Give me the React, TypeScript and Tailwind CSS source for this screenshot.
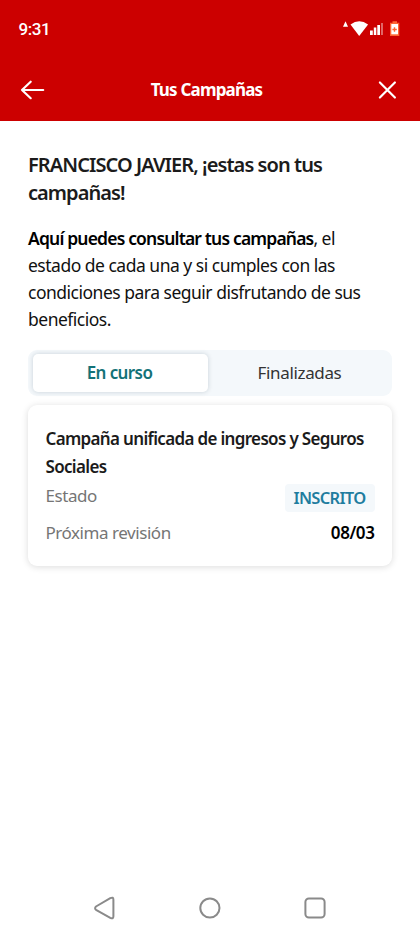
import React from 'react';

interface Campaign {
  name: string[];
  status: string;
  nextReview: string;
}

const campaign: Campaign = {
  name: ['Campaña unificada de ingresos y Seguros', 'Sociales'],
  status: 'INSCRITO',
  nextReview: '08/03',
};

const StatusBar = () => (
  <div className="flex h-[58px] items-center justify-between pl-[18.5px] pr-[20px]">
    <span className="font-[Roboto] text-[17px] font-medium leading-5 tracking-[-0.4px]">9:31</span>
    <svg width="58" height="20" viewBox="342 18 58 20" fill="none">
      <path d="M345.5 20.3l2.5 5.500h-5z" fill="#fff" />
      <path d="M350.5 23.5q8.800-6.600 17.600 0L359.2 35z" fill="#fff" />
      <path d="M370 29.500h2.800v4.500H370zM373.800 26.500h2.500v7.500h-2.500zM377.300 24h2.700v10h-2.700z" fill="#fff" />
      <path d="M381 22h2v12h-2z" fill="#fff" fillOpacity="0.4" />
      <path d="M392.500 20.200h4.500v1.500h2.300v13.300h-9.300v-13.300h2.500z" fill="#ff6534" />
      <path d="M391.300 23h6.700v10.300h-6.700z" fill="#fff" />
      <path d="M394.500 26.200v4.600M392.400 28.500h4.400" stroke="#ff6534" strokeWidth="1.4" />
    </svg>
  </div>
);

const Header = () => (
  <header className="h-[121px] bg-[#cc0000] text-white">
    <StatusBar />
    <div className="flex h-[63px] items-center justify-between pl-5 pr-[21px]">
      <button aria-label="Volver">
        <svg width="25" height="24" viewBox="0 0 25 24" fill="none" stroke="currentColor" strokeWidth="2.2" strokeLinecap="round" strokeLinejoin="round">
          <path d="M10.700 3.700L2 12l8.700 8.200M2 12h21.200" />
        </svg>
      </button>
      <h1 className="mr-[7px] text-[17px] font-bold leading-6 tracking-[-0.8px]">Tus Campañas</h1>
      <button aria-label="Cerrar">
        <svg width="24" height="24" viewBox="0 0 24 24" fill="none" stroke="currentColor" strokeWidth="2.2" strokeLinecap="round">
          <path d="M4.900 4.500l15 15M19.900 4.500l-15 15" />
        </svg>
      </button>
    </div>
  </header>
);

const Tabs = () => (
  <div className="mt-[17px] flex h-[46px] rounded-[9px] bg-[#f4f8fb] p-1 pl-[5px]">
    <button className="w-[175px] rounded-[5px] bg-white pr-[2px] text-[17px] font-semibold tracking-[-0.6px] text-[#137277] shadow-[0_0_5px_rgba(0,40,60,0.18)]">
      En curso
    </button>
    <button className="flex-1 pl-[3px] text-[17px] tracking-[-0.35px] text-[#333]">Finalizadas</button>
  </div>
);

const CampaignCard: React.FC<{ campaign: Campaign }> = ({ campaign }) => (
  <article className="mt-[9px] h-[161px] rounded-[9px] bg-white px-[17.5px] pt-5 shadow-[0_1px_7px_rgba(0,0,0,0.14)]">
    <h3 className="whitespace-nowrap text-[17px] font-semibold leading-7 tracking-[-0.67px] text-[#1b1b1b]">
      {campaign.name.map((line) => (
        <span key={line} className="block">{line}</span>
      ))}
    </h3>
    <div className="mt-[3px] flex items-start justify-between">
      <span className="text-[17px] leading-[23px] tracking-[-0.45px] text-[#757575]">Estado</span>
      <span className="flex h-7 w-[90px] items-center justify-center rounded-[4px] bg-[#f4f8fb] text-[16.5px] font-semibold tracking-[-0.7px] text-[#1f7d9f]">
        {campaign.status}
      </span>
    </div>
    <div className="mt-[9px] flex items-center justify-between text-[17px] leading-6">
      <span className="tracking-[-0.45px] text-[#757575]">Próxima revisión</span>
      <span className="font-semibold tracking-[-0.4px] text-black">{campaign.nextReview}</span>
    </div>
  </article>
);

const NavigationBar = () => (
  <nav className="flex h-14 justify-center">
    <svg width="240" height="56" viewBox="90 880 240 56" fill="none" stroke="#8a8a8a" strokeWidth="2" strokeLinejoin="round">
      <path d="M96 906.500L110.300 898.200Q113.400 896.600 113.400 899.700V916.300Q113.400 919.400 110.300 917.800L96 909.800Q94.200 908.200 96 906.500z" />
      <circle cx="209.900" cy="908" r="9.600" />
      <rect x="305.400" y="898.400" width="19.200" height="19.200" rx="3.500" />
    </svg>
  </nav>
);

export default function App() {
  return (
    <div className="flex h-[936px] w-[420px] flex-col overflow-hidden bg-white font-['Noto_Sans',sans-serif]">
      <Header />
      <main className="flex-1 px-7 pt-[30px]">
        <h2 className="whitespace-nowrap text-[20px] font-semibold leading-7 tracking-[-0.94px] text-[#1b1b1b]">
          FRANCISCO JAVIER, ¡estas son tus
          <br />
          campañas!
        </h2>
        <p className="mt-[18px] whitespace-nowrap text-[17.5px] leading-[27px] tracking-[-0.5px] text-[#111]">
          <strong className="font-semibold tracking-[-0.83px] text-black">Aquí puedes consultar tus campañas</strong>, el
          <br />
          estado de cada una y si cumples con las
          <br />
          condiciones para seguir disfrutando de sus
          <br />
          beneficios.
        </p>
        <Tabs />
        <CampaignCard campaign={campaign} />
      </main>
      <NavigationBar />
    </div>
  );
}
